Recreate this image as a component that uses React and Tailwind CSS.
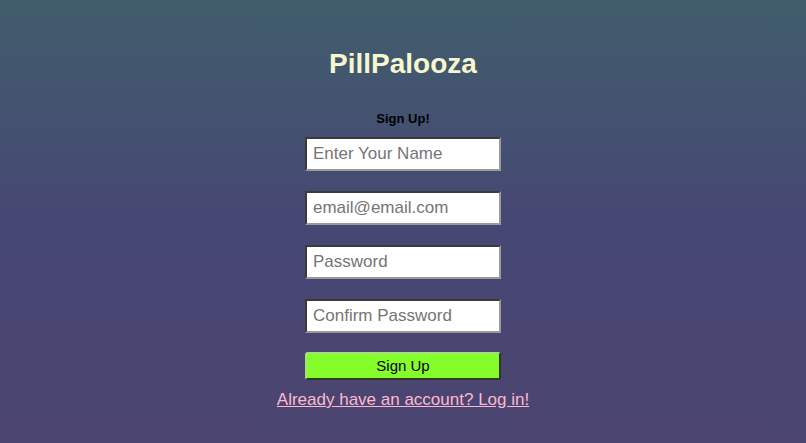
import React from "react";

export default function App() {
  return (
    <div
      className="min-h-[443px] w-full flex flex-col items-center bg-gradient-to-b from-[#405d6b] via-[#464774] to-[#4b4470] font-['Liberation_Sans',Arial,sans-serif]"
    >
      <h1 className="mt-[48px] text-[28px] leading-[32px] font-bold text-[#f6f6cf]">PillPalooza</h1>
      <h3 className="mt-[31px] text-[13px] leading-[16px] font-bold text-black">Sign Up!</h3>
      <form className="flex flex-col items-center mt-[10px]" onSubmit={(e) => e.preventDefault()}>
        <input
          type="text"
          placeholder="Enter Your Name"
          className="w-[196px] h-[34px] px-[6px] bg-white text-[17px] text-black placeholder:text-[#757575] border-2 border-t-[#3a3a3a] border-l-[#3a3a3a] border-b-[#9a9a9a] border-r-[#9a9a9a] outline-none"
        />
        <input
          type="email"
          placeholder="email@email.com"
          className="mt-[20px] w-[196px] h-[34px] px-[6px] bg-white text-[17px] text-black placeholder:text-[#757575] border-2 border-t-[#3a3a3a] border-l-[#3a3a3a] border-b-[#9a9a9a] border-r-[#9a9a9a] outline-none"
        />
        <input
          type="password"
          placeholder="Password"
          className="mt-[20px] w-[196px] h-[34px] px-[6px] bg-white text-[17px] text-black placeholder:text-[#757575] border-2 border-t-[#3a3a3a] border-l-[#3a3a3a] border-b-[#9a9a9a] border-r-[#9a9a9a] outline-none"
        />
        <input
          type="password"
          placeholder="Confirm Password"
          className="mt-[20px] w-[196px] h-[34px] px-[6px] bg-white text-[17px] text-black placeholder:text-[#757575] border-2 border-t-[#3a3a3a] border-l-[#3a3a3a] border-b-[#9a9a9a] border-r-[#9a9a9a] outline-none"
        />
        <button
          type="submit"
          className="mt-[19px] w-[196px] h-[28px] bg-[#84fd2b] text-[15px] text-black border-2 border-t-[#a6e07a] border-l-[#a6e07a] border-b-[#2c3a20] border-r-[#2c3a20] rounded-[3px]"
        >
          Sign Up
        </button>
      </form>
      <a href="#" className="mt-[9px] text-[17px] leading-[21px] text-[#ffb8cf] underline">
        Already have an account? Log in!
      </a>
    </div>
  );
}
